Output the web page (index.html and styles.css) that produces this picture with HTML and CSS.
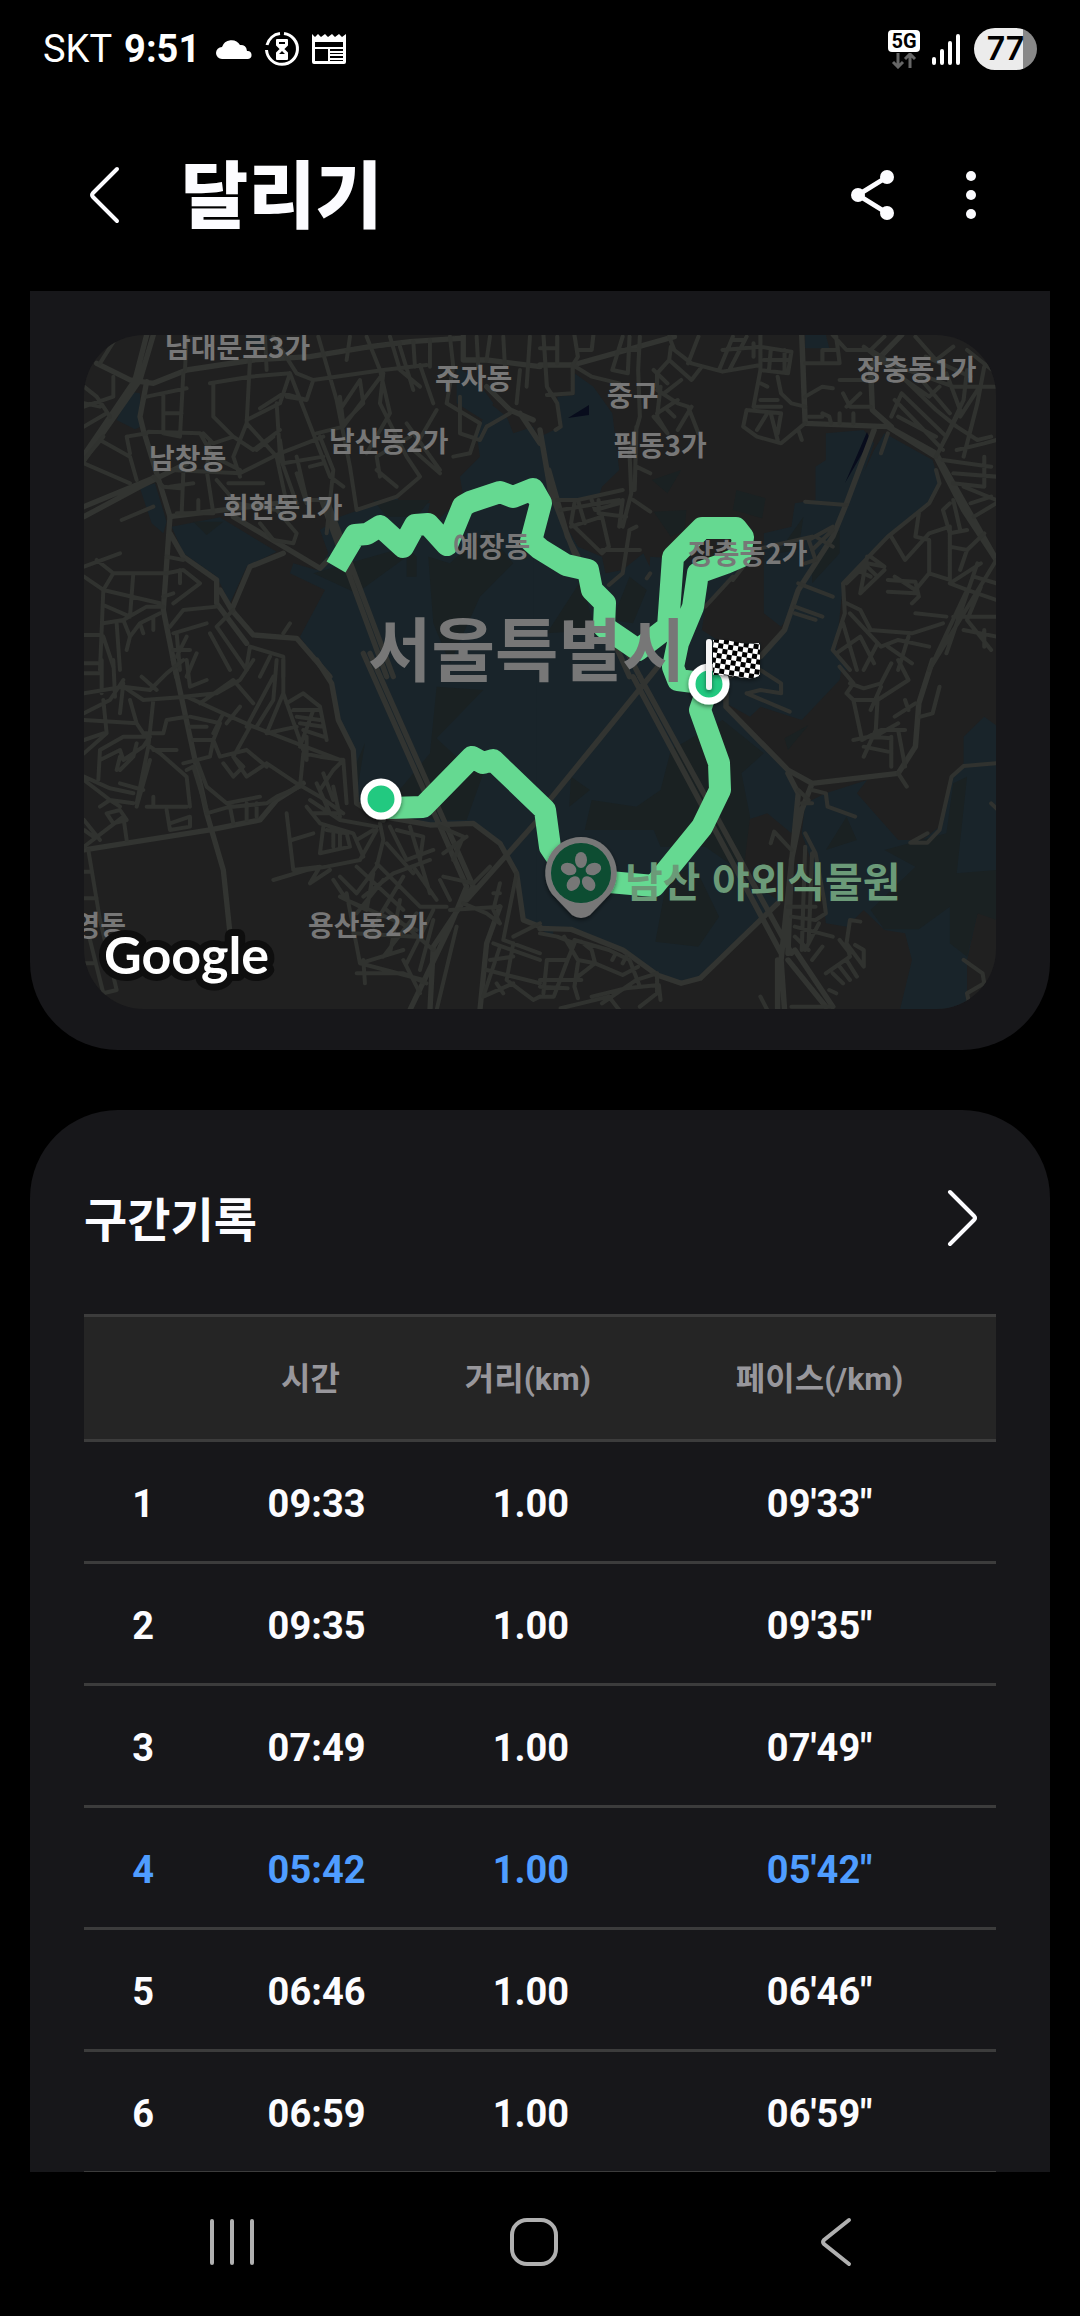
FILE: index.html
```html
<!DOCTYPE html>
<html lang="ko">
<head>
  <meta charset="UTF-8">
  <meta name="viewport" content="width=device-width, initial-scale=1.0">
  <title>달리기</title>
  <link rel="stylesheet" href="styles.css">
</head>
<body>
  <div class="status">
    <div class="status-left">
      <span class="carrier">SKT</span>
      <span class="clock">9:51</span>
      <svg class="cloud" width="36" height="22" viewBox="0 0 36 22"><path d="M6 21a6 6 0 0 1 0-12A10 10 0 0 1 24 7a6 6 0 0 1 7 6 4 4 0 0 1 1 8z" fill="#fff"/></svg>
      <svg width="36" height="36" viewBox="0 0 36 36">
        <path d="M20 2.500A15.500 15.500 0 1 1 2.500 19M3 14A15.500 15.500 0 0 1 16 2.500" fill="none" stroke="#fff" stroke-width="3"/>
        <path d="M13 9h10v5l-4 4 4 4v6H13v-6l4-4-4-4z" fill="#fff" stroke="#fff" stroke-width="2" stroke-linejoin="round"/>
        <path d="M15 11h6v2h-6zM15 23l3-3 3 3z" fill="#000"/>
      </svg>
      <svg class="note" width="34" height="32" viewBox="0 0 34 32">
        <path d="M0 1l3 3 3-3 3 3 4-3 3 3 4-3 3 3 4-3 3 3 4-3v28a2 2 0 0 1-2 2H2a2 2 0 0 1-2-2z" fill="#fff"/>
        <path d="M3 9h28v5H3zM3 16h13v12H3zM18 16h13v2H18zM18 20h13v1H18zM18 23h13v2H18zM18 27h13v1H18z" fill="#000"/>
      </svg>
    </div>
    <div class="status-right">
      <div class="network">
        <span class="network-type">5G</span>
        <svg width="26" height="16" viewBox="0 0 26 16"><path d="M7 0v14M2 9l5 5 5-5M19 15V1M14 6l5-5 5 5" fill="none" stroke="#666" stroke-width="3"/></svg>
      </div>
      <svg width="28" height="32" viewBox="0 0 28 32"><path d="M2 26v4M10 18v12M18 10v20M26 3v27" stroke="#fff" stroke-width="4" stroke-linecap="round"/></svg>
      <span class="battery">77</span>
    </div>
  </div>

  <header class="appbar">
    <button class="icon-btn" aria-label="뒤로">
      <svg width="32" height="58" viewBox="0 0 32 58"><path d="M28 3 4 27q-2 2 0 4l24 24" fill="none" stroke="#fcfcff" stroke-width="4" stroke-linecap="round"/></svg>
    </button>
    <h1>달리기</h1>
    <button class="icon-btn" aria-label="공유">
      <svg width="44" height="52" viewBox="0 0 44 52"><path d="M36 8 7 26l29 18" fill="none" stroke="#fcfcff" stroke-width="5"/><g fill="#fcfcff"><circle cx="36" cy="8" r="7"/><circle cx="7" cy="26" r="7"/><circle cx="36" cy="44" r="7"/></g></svg>
    </button>
    <button class="icon-btn more" aria-label="더보기">
      <svg width="10" height="48" viewBox="0 0 10 48" fill="#fcfcff"><circle cx="5" cy="5" r="5"/><circle cx="5" cy="24" r="5"/><circle cx="5" cy="43" r="5"/></svg>
    </button>
  </header>

  <main>
    <section class="card map-card">
      <svg class="map" viewBox="0 0 912 674" role="img" aria-label="달리기 경로">
        <defs>
          <pattern id="checker" width="10" height="10" patternUnits="userSpaceOnUse" patternTransform="rotate(9)">
            <rect width="10" height="10" fill="#fff"/>
            <path d="M0 0h5v5H0zM5 5h5v5H5z" fill="#000"/>
          </pattern>
          <filter id="shadow" x="-30%" y="-30%" width="160%" height="160%">
            <feDropShadow dx="0" dy="2" stdDeviation="2" flood-opacity="0.5"/>
          </filter>
        </defs>

        <!-- 공원 -->
        <g class="park">
          <path transform="translate(-64 -65) scale(.3333)" d="M330 365 360 370 362 470 345 478 290 450ZM360 655 405 640 440 755 430 790 395 760ZM455 770 600 742 770 845 680 890 630 1000 590 920 490 850ZM690 190h60l-30 45-40-20zM1310 290 1370 330 1420 400 1390 450 1310 400ZM1410 400 1460 440 1480 490 1540 470 1620 700V1220H920L840 1100 915 960 810 910 820 880 890 900 925 850 900 780 960 740 1130 680 1140 700 1230 700 1210 790 1330 680 1320 620 1380 560 1370 490Z"/>
          <path transform="translate(456 -65) scale(.3444 .3333)" d="M50 380 100 375 100 310 155 350 210 430 230 600 180 650 170 680 110 690 40 685 0 500 60 470ZM-20 600 60 740 110 830 180 860 190 910 240 900 300 850 350 960 340 1200H-20ZM320 860 600 880 480 1010 470 1080 530 1120 640 1120 640 1200H300ZM830 490 940 480 970 520 930 640 870 790 800 880 750 1000 700 1070 650 1030V790L730 770 740 700 800 690V590L830 570ZM1000 490 1140 570 1160 640 1130 700 1010 800 880 940 860 1140 900 1200H620L640 1160 710 1090 780 900 900 700 970 540ZM770 195h60l10 40h-70z"/>
          <path transform="translate(-64 325) scale(.3333)" d="M880 0H1600V830L1510 780 1480 630 1430 550 1360 490 1230 490 1010 430 1000 270 950 180 930 70Z"/>
          <path transform="translate(456 325) scale(.3444 .3333)" d="M-10 0H880L870 60 760 180 640 140 610 170 540 130 720 340 750 400 730 520 660 460 600 480 590 650 690 720 460 950 410 970 340 940 240 870 90 805-10 800ZM1290 170 1330 200V620L1270 760 1240 900V1050H1045L1080 900 1060 820 1000 810 940 750 890 800 830 790 820 700 760 520 770 430 830 400 950 360 920 400 1040 540 1110 540 1160 500 1190 350 1230 310V230Z"/>
        </g>
        <g class="wood">
          <path transform="translate(-64 -65) scale(.3333)" d="M1225 860 1290 880 1400 780 1480 880 1380 980 1290 1180 1240 1060ZM880 910 1160 830 1190 860 1190 920H1160V860L1010 970ZM520 755h90l-50 40zM1060 690h170l-40 50h-90z"/>
          <path transform="translate(456 -65) scale(.3444 .3333)" d="M325 630 410 600 370 670ZM330 725 425 720 420 780 380 800ZM570 660 655 685 645 745 560 720ZM20 1090 120 930 160 1080ZM210 1050 260 920 310 960 270 1060ZM690 850 765 740 750 840ZM790 870 870 780 870 850 790 940Z"/>
          <path transform="translate(-64 325) scale(.3333)" d="M1250 80 1390 90 1250 235 1330 310 1390 340 1340 480 1240 480 1130 400 1230 280ZM1000 330 1035 250 1010 400Z"/>
          <path transform="translate(456 325) scale(.3444 .3333)" d="M380 270 530 180 650 280 585 340 610 470 590 640 480 560 350 560 330 510 130 510 150 420 280 440 350 390ZM370 650 450 620 520 770 460 860 335 845ZM90 350 145 390 85 440ZM710 235 780 195 720 270ZM830 570 890 470 920 540ZM1000 570 1180 520 1200 370 1240 350 1210 640 1325 630 1325 780 1270 760 1240 890 1190 850 1190 740 1100 808 1000 808 960 750 1090 620Z"/>
        </g>
        <path class="water" d="M484 83 505 70V80ZM761 148 783 97 786 105Z"/>

        <!-- 큰길 -->
        <g class="road wide">
          <g transform="translate(-64 -65) scale(.3333)">
            <path d="M192 570 360 330 400 195M192 555 345 330 380 195M230 280 330 330 400 340 500 300 700 270 870 260 1050 230 1170 215 1320 205M380 335 360 440 370 480 450 740M192 710 410 620M192 740 360 650 500 580M1330 195V270H1400L1560 290M1400 350 1470 420 1540 450M905 690 1100 1220M920 690 1120 1220M1500 430 1560 520"/>
            <path d="M450 740 440 880 430 1020 470 1220M450 740 770 700M450 790 490 860 590 930 590 1000 680 1120M640 740 900 895 925 870M790 850 690 890 635 1020 600 960M635 1020 700 1095 830 1105 930 1220"/>
          </g>
          <g transform="translate(456 -65) scale(.3444 .3333)">
            <path d="M0 285H95L390 200M770 460 1010 470 1150 560 1230 720 1325 870M1010 470 1150 550 1320 860M0 480 30 660 100 850 260 1220M25 600 80 800 290 1220M760 195 770 460M970 480 890 700 850 800 750 960 710 1080 640 1160 550 1220M1050 195 960 290 965 420 1020 470"/>
          </g>
          <g transform="translate(-64 325) scale(.3333)">
            <path d="M1030-20 1340 680M1050-20 1360 680M460 0 560 460 610 630 630 820M192 570 570 510 720 480 770 420 850 370M1340 680 1290 800 1170 1050M1360 680 1240 860 1230 1050M1090 470 1230 495 1360 490 1440 550 1490 640 1510 780 1560 800M1580 450 1340 720M890 0 935 70 955 180 1000 270 1010 430 1090 480M1440 740 1400 850 1380 1050"/>
          </g>
          <g transform="translate(456 325) scale(.3444 .3333)">
            <path d="M270 50 700 880M290 50 730 880M350 10 170 240 20 430M540 60V140L720 330 790 370 1040 340 1090 260 1100 130 1140 0M720 340 750 400 735 560 700 900 710 1050M790 370 760 450 730 600 720 880M690 900 690 1050M720 900 830 1040M740 870 850 1040M0 805 90 808 240 870 340 945 410 970 465 955 690 730"/>
          </g>
        </g>

        <!-- 골목길 -->
        <g class="road">
          <g transform="translate(-64 -65) scale(.3333)">
            <path d="M240 280 290 200M280 320V380L192 410M192 350 230 380 270 440M192 400 240 410M380 380 500 355M430 375V480M490 310 480 500 430 490M430 430h55M385 485 540 490 580 560 660 600M450 600 660 610 780 550 910 500M570 340 690 320 810 310M580 340 580 440 640 500 580 520 550 490M690 270 680 460 770 560 800 700M680 460 640 560 660 620M810 310 780 400 680 450M770 400 780 560 830 700M810 310 930 620 970 650M760 200 830 310 880 330 1090 300 1220 285M800 380 860 390 880 330M860 390 790 370 720 415M895 200 950 390 990 590 1010 720M960 380 970 460 1030 400 1020 330 960 420M1090 310 1080 400 1110 460 1160 560 1200 620 1130 680 1010 720M1090 310 970 470 890 490M1040 200 1080 300 1110 430 1040 550M1110 200 1140 300 1200 350M1140 230 1180 360M1200 285 1240 400M1290 200 1300 290M1180 215 1185 290M1230 210V290M1370 200 1375 290M1410 200 1400 270M1450 200 1455 290M1300 290 1280 400 1380 460M1250 420 1180 540 1260 610M1320 380 1320 490 1380 510 1400 470M1380 460 1350 550 1300 560M1470 430 1400 470M1160 460 1260 600M1080 620 1070 560 1170 500M1070 600 1130 650M900 500 940 600 920 790M780 510 790 580 910 560M830 560 860 690 910 690M870 590 910 580M830 610 860 700M640 500 700 540 780 480M710 540 760 500M570 510 560 600 580 730 470 730M490 610 485 730M535 690V730M400 620 430 650 480 655M450 650 520 640M625 640H730M590 630 650 700 770 720 830 790 820 820 760 810 720 760M305 750 400 710M240 510 330 560 350 630M250 500 192 570M192 580 330 640M320 500 380 490M320 500 330 550M990 200 980 270M980 240 1140 220M1500 300 1490 400M1530 200 1520 350M192 890 300 850M230 870 280 910 250 960 192 920M250 960 240 1200M250 960 420 1000M280 910H430M340 910 330 1040 250 1005M250 1060 310 1050 380 1010 430 1010M290 1060 300 1200M310 1050 330 1100 320 1140M330 1100 360 1060 420 1030M360 1060 370 1090M400 1040V1080M440 910 490 900 540 940 460 1000M480 900V940M440 860 490 870M430 980 460 970M450 1070 490 1020 590 1010M460 1090 560 1060M470 1090 480 1200M500 1100 470 1160M460 1140H510M570 1090 630 1200M590 1070 640 1020M590 1070 680 1200M690 1130 790 1160 790 1220M690 1130 680 1190M790 1090 810 1060M192 1095H240M192 1180H240M250 1100 280 1190M735 200 740 300M500 200 495 300M192 470 260 430M720 1220 750 1160M530 1150 500 1220"/>
          </g>
          <g transform="translate(456 -65) scale(.3444 .3333)">
            <path d="M10 195 20 350 50 400 60 470 45 480M50 200V280M0 235H50M100 195 110 260 95 285 150 320 230 340M110 240H150L155 195M240 200 210 300 255 310 260 200M290 200 285 300 290 440 260 550 265 670 240 770M230 240H280M95 290V370L20 375M280 470 275 660M380 230 375 270 340 310 340 350M375 200 390 240 440 280 530 305 640 285M375 270 440 330 470 290M330 300 370 340M460 200 430 280M560 200 520 300M600 200 550 300M530 240 640 230 730 245 720 310 640 300M640 195V300L620 410H700M560 210H590M620 220V260M670 240 665 300M710 240V300M650 270H720M690 320 700 370 730 400 770 410M640 340 660 350M640 390H690M770 280H870L860 200M820 280V240H860M770 380 820 350 850 355M870 330H960M880 370 900 410H960M890 410 930 370M850 195 890 240 960 240 1000 200M600 420 590 470 630 500 700 520 770 460M600 420 700 430 690 490M660 430 630 480M670 430 690 510M750 480 760 510M820 430 840 440 845 460M780 440H820M870 430V460M910 430V460M340 360 400 400 430 410 460 490M340 430 400 390M350 350 340 440 370 490M360 370 410 330M370 490 330 440M390 440 370 420M440 410 400 480M280 590 320 610M50 690 110 690 240 660M60 720 230 690M100 700 90 760 180 850 200 830 180 740 90 770M110 690 130 760M150 690 160 720 230 700M170 690V730L250 740M240 690 230 770M270 690 320 725M280 770 260 780M180 840 290 840M260 780 240 910 200 945M320 910 310 925M770 695 890 705M850 770 780 810 800 870 770 880M800 800 850 830M850 780 790 840M560 920 480 1010M620 850 560 930M750 940 850 980M740 1010 820 1040M740 1030 800 1050M620 840 790 800M940 230 1050 320 1150 420 1210 470 1270 510M960 240 1040 290 1200 350 1325 350M1050 370 1020 440M1050 370 1180 500M1030 390 1170 540M1040 440 1150 500M1060 330 1130 380 1160 350M1100 320 1190 430M1180 310 1220 420 1190 480 1150 560M1240 300 1230 390 1160 540M1290 290 1270 400 1230 560M1270 360 1220 440M1270 510 1310 500M1210 540 1290 520 1325 510M1170 570 1310 590M1200 610 1325 620M1200 640 1290 650V560M1230 650 1325 690M1250 700 1310 680M1260 740 1325 700M1150 600 1160 640 1130 700 1010 800 880 940 885 1030 850 1140 900 1200M1020 800 1060 870 1130 790 1190 770M1100 730 1090 800 1130 810V910L1090 960 1030 920M1190 700 1170 720 1190 790 1240 780M1200 690 1220 780M1190 770V930L1130 910M1190 940 1280 880M1190 830 1240 840 1290 790M1240 840 1220 900M890 940 950 880 1000 890 960 860M940 880 980 920 930 970M920 900 960 920M950 860 930 970 1000 900M1010 930 1090 935 1100 980 1080 1000M1010 965 1090 970M1190 940 1240 960 1140 1180M1325 870 1130 1200M1240 960 1325 990M1260 920 1325 940M1270 880 1180 1150M1280 950 1240 1050 1310 1140M1200 1040H1325M1230 1080 1325 1100M1090 1030 1180 1040M890 1000 930 1020 960 1080 1080 1090 1170 1060M900 1030 990 1130 1040 1110 1130 1130M880 1060 920 1200M860 1150 930 1100 970 1180M980 1120 940 1200M1070 1100 1040 1200M1010 1130 1080 1180M1290 1130 1290 1080M1010 490 990 550M1090 200 1150 270 1200 230M1120 260 1250 320M1240 240 1325 310"/>
          </g>
          <g transform="translate(-64 325) scale(.3333)">
            <path d="M245 0V100M280 0 285 110M192 40H240M192 100 310 80 370 120 500 110M310 70 300 160M310 80 390 90 440 40 490 0M365 50 410 90M400 120 385 260 350 430M330 120 350 190 370 220H430L440 180 500 170M250 120 260 220 192 280M192 160 270 120 310 60M192 180 350 190M192 240 250 220M240 270 310 230 390 230 370 260M240 270 235 360M240 300 300 270 310 300 370 260M290 330 300 290M350 250 340 290 300 330M192 360 270 420 340 430M192 350 270 385 340 400M390 300 350 440M390 260 420 280 500 350 510 440M400 270 470 270M500 110 610 160 700 200 830 250 960 300M490 110 590 100 660 60 700 0M540 130 640 60 700 130M500 0 510 80 560 60M510 170 600 190 580 240 520 240M510 200 560 200M490 310 570 290 580 240 600 290 680 270M530 300 560 380 620 430 720 410M500 330 520 320 560 450M610 160 580 220M660 140 620 190M690 200 640 290 680 350 740 310M710 200 760 120 770 0M790 0 790 100 850 270M760 50 680 200M790 100 740 220 830 200M800 130 850 100 900 140 920 240M820 150 900 150M830 170 900 180M840 190 910 200M850 210 910 230M860 230V300M880 150 840 260M740 310 830 370 900 410 970 460M740 320 680 270M610 310 640 350 670 320 640 290M560 460 630 440 640 490M620 430 640 440 740 430 770 410M680 430V480M710 430V470M440 450 450 510 510 500 510 470 450 490M310 470 320 540M380 440 500 440M260 460 300 450 320 480 280 490ZM400 410V440M300 370 370 390M240 440 270 420 300 440M192 560 310 470M192 480 240 540M192 510 220 530M205 570 240 780 290 990 250 1000 210 840M192 635H210M192 715H230M192 910H220M800 460 820 630M760 660 860 630 920 620 1020 600 1070 510M815 540 880 520M820 630 900 620 870 670M870 670 930 630M920 510 980 520 990 560 900 580 910 500M940 520V560M960 520V560M850 280 840 380 770 410M850 280 900 290 970 300 980 430M900 390 940 330 970 300M870 420 960 480 1070 500M860 440 900 490 1000 520 1030 590M890 370 930 460M910 340 940 420M940 380 960 470M880 460H960M1010 540 1060 510M1080 490 1090 540 1070 620 1010 700 960 650M1100 550 1180 640M1110 500 1160 600 1240 570M1130 510 1210 530 1200 600M1170 500 1230 700M940 660 980 720 1190 810M1010 620 1150 750M1070 610 1200 740 1280 740M1030 710 1120 640 1230 600M1060 640 1040 750 960 710M1090 660 1010 760M1150 650 1060 800M1180 620 1250 720M1260 500 1330 530 1300 600M1270 580 1340 530M980 700 1020 910 1150 870M1000 820 1190 830M1020 910 1210 960M1010 940H1150L1220 970M1100 750 1240 870M1140 720 1110 880M1190 760 1090 890M1240 750 1160 910M1240 780 1200 930M1150 900 1200 1000M1030 900 1035 970M1260 660 1290 720M1270 650 1360 670 1410 620M1290 750 1440 740M1440 670 1420 750 1440 790M1420 700H1440M1330 730 1400 760 1440 790M1490 640 1450 840 1560 880M1480 830 1560 790M1420 850 1560 900M1410 900 1480 890M1400 930 1560 970M1440 860 1390 1010 1480 970M1480 850 1460 960 1540 1020 1560 1010M1450 1000 1430 970M1310 800 1250 1050"/>
          </g>
          <g transform="translate(456 325) scale(.3444 .3333)">
            <path d="M600 100 640 90 700 100V70L610 10M600 100 725 155M870 20 910 70 890 100 910 120 980 120 1070 60 1040 0M900 70 940 85 990 70 1020 10M910 120 935 240 990 210 1060 210M980 120 975 210 940 290M990 80 960 150M1030 170 1090 130M1040 210 1060 320M1020 230V320M940 260 1010 275M910 240 980 225 1040 190M960 230 1020 235M1060 120 1070 150M1105 170 1140 160 1160 80M1040 340 1065 380M1325 310 1230 318 1195 350 1160 510 1125 548H1075L1125 520M790 390 830 400 835 440 915 470M750 390 780 420M760 430H790M670 550 680 515 730 570M770 520 800 580 825 720 830 760 800 780 730 770M770 560 760 870M790 580 780 850M720 740H800M740 800 850 830M740 830 780 870M810 790 770 870M930 785 900 780 890 850 940 920V870L915 855M890 850 900 890 830 940M870 840 900 880M850 940 880 970M870 920 900 960M890 900 920 950M820 860 790 900M1230 900 1285 940 1290 970 1240 1000 1250 1050M0 820 50 830 100 850 80 900 20 900M70 830 110 900 160 910 240 945 285 920M120 845 150 870 160 910M100 840 200 870 260 900 290 980M210 900 220 880M240 910 250 890M80 900 40 1010 0 1010M110 910 100 980 110 1015M0 960H120M0 980 80 985M20 900 10 1000M160 910 110 950M150 1010 250 985 345 975 350 1020M180 1030 280 960 340 940V1000L290 1040M60 1045 200 1010 230 1050M640 1010 660 1050M730 1040H850M840 990 860 1000M1310 430 1330 450"/>
          </g>
        </g>

        <!-- 달린 경로 -->
        <path class="route" d="M297 464 305 473 339 472 388 422 399 428 409 425 461 475 466 512 474 524 497 538 525 547 570 551 618 492 636 455 635 428 616 375 625 349M625 349 594 345 589 332 594 308 609 272 614 238 642 228 656 222 659 202 652 193 618 193 589 222 584 292 554 315 535 302 520 292 521 268 508 255 504 235 482 230 456 214 447 206 457 168 449 154 429 162 416 157 386 167 379 171 363 210 344 189 331 190 319 212 296 191 283 199 271 200 252 232"/>

        <!-- 지명 -->
        <g class="label">
          <text x="81" y="23">남대문로3가</text>
          <text x="351" y="54">주자동</text>
          <text x="245" y="117">남산동2가</text>
          <text x="65" y="134">남창동</text>
          <text x="139" y="183">회현동1가</text>
          <text x="369" y="222">예장동</text>
          <text x="523" y="71">중구</text>
          <text x="529" y="121">필동3가</text>
          <text x="773" y="45">장충동1가</text>
          <text x="604" y="229">장충동2가</text>
          <text x="224" y="601">용산동2가</text>
          <text x="42" y="601" text-anchor="end">남영동</text>
          <text class="city" x="284" y="341">서울특별시</text>
          <text class="place" x="541" y="562">남산 야외식물원</text>
        </g>

        <g class="marker" filter="url(#shadow)">
          <circle cx="297" cy="464" r="17"/>
          <circle cx="625" cy="349" r="17"/>
        </g>

        <!-- 도착 깃발 -->
        <g filter="url(#shadow)">
          <path d="M629 305q12-1 22 2t25 1v32q-5 5-22 2t-25-2z" fill="url(#checker)"/>
          <path d="M625 307v45" stroke="#f5f5f5" stroke-width="6" stroke-linecap="round"/>
        </g>

        <!-- 식물원 핀 -->
        <g transform="translate(497 538)" filter="url(#shadow)">
          <path d="M0-36a36 36 0 0 1 29 57L9 42q-9 6-18 0L-29 21A36 36 0 0 1 0-36z" fill="#777"/>
          <circle r="30" fill="#094d32"/>
          <g fill="#777">
            <ellipse cy="-13" rx="6" ry="8"/>
            <ellipse cy="-13" rx="6" ry="8" transform="rotate(72)"/>
            <ellipse cy="-13" rx="6" ry="8" transform="rotate(144)"/>
            <ellipse cy="-13" rx="6" ry="8" transform="rotate(216)"/>
            <ellipse cy="-13" rx="6" ry="8" transform="rotate(288)"/>
          </g>
        </g>

        <text class="google" x="20" y="639">Google</text>
      </svg>
    </section>

    <section class="card lap-card">
      <div class="card-head">
        <h2>구간기록</h2>
        <button class="icon-btn" aria-label="구간기록 더보기">
          <svg width="32" height="58" viewBox="0 0 32 58"><path d="M4 3 28 27q2 2 0 4L4 55" fill="none" stroke="#fcfcff" stroke-width="4" stroke-linecap="round"/></svg>
        </button>
      </div>
      <table>
        <thead>
          <tr><th class="no"></th><th class="time">시간</th><th class="dist">거리(km)</th><th class="pace">페이스(/km)</th></tr>
        </thead>
        <tbody>
          <tr><td>1</td><td>09:33</td><td>1.00</td><td class="pace">09'33"</td></tr>
          <tr><td>2</td><td>09:35</td><td>1.00</td><td class="pace">09'35"</td></tr>
          <tr><td>3</td><td>07:49</td><td>1.00</td><td class="pace">07'49"</td></tr>
          <tr class="best"><td>4</td><td>05:42</td><td>1.00</td><td class="pace">05'42"</td></tr>
          <tr><td>5</td><td>06:46</td><td>1.00</td><td class="pace">06'46"</td></tr>
          <tr><td>6</td><td>06:59</td><td>1.00</td><td class="pace">06'59"</td></tr>
        </tbody>
      </table>
    </section>
  </main>

  <nav class="navbar">
    <button aria-label="최근 앱"><svg width="44" height="48" viewBox="0 0 44 48"><path d="M2 3v42M22 3v42M42 3v42" stroke="#b0b0b0" stroke-width="4" stroke-linecap="round"/></svg></button>
    <button aria-label="홈"><svg width="50" height="50" viewBox="0 0 50 50"><rect x="3" y="3" width="44" height="44" rx="15" fill="none" stroke="#b0b0b0" stroke-width="4"/></svg></button>
    <button aria-label="뒤로"><svg width="32" height="50" viewBox="0 0 32 50"><path d="M29 3 4 23q-2 2 0 4l25 20" fill="none" stroke="#b0b0b0" stroke-width="4" stroke-linecap="round"/></svg></button>
  </nav>
</body>
</html>
```

FILE: styles.css
```css
* {
  margin: 0;
  padding: 0;
  box-sizing: border-box;
}
body {
  display: flex;
  flex-direction: column;
  height: 100vh;
  overflow: hidden;
  background-color: #000;
  color: #fcfcff;
  font-family: Roboto, "Noto Sans CJK KR", sans-serif;
}
svg {
  display: block;
}
button {
  border: none;
  background: none;
  cursor: pointer;
}

/* 상태 표시줄 */
.status {
  display: flex;
  flex-shrink: 0;
  justify-content: space-between;
  align-items: center;
  height: 98px;
  padding: 0 43px;
  color: #fff;
}
.status-left,
.status-right {
  display: flex;
  align-items: center;
  gap: 12px;
}
.carrier {
  font-size: 38px;
  font-weight: 400;
}
.clock {
  margin-right: 4px;
  font-size: 38px;
  font-weight: 700;
}
.network {
  display: flex;
  flex-direction: column;
  align-items: center;
  gap: 1px;
}
.network-type {
  width: 32px;
  border-radius: 4px;
  background-color: #fff;
  color: #000;
  font-size: 20px;
  font-weight: 700;
  line-height: 22px;
  text-align: center;
}
.battery {
  width: 63px;
  margin-left: 2px;
  border-radius: 21px;
  background: linear-gradient(to right, #ececec 77%, #888 77%);
  color: #000;
  font-family: Inter, sans-serif;
  font-size: 32px;
  font-weight: 600;
  line-height: 42px;
  text-align: center;
}

/* 제목 줄 */
.appbar {
  display: flex;
  flex-shrink: 0;
  align-items: center;
  height: 193px;
  padding: 0 104px 0 89px;
}
.appbar h1 {
  flex: 1;
  margin-left: 60px;
  padding-top: 4px;
  font-size: 73px;
  font-weight: 900;
  line-height: 96px;
}
.more {
  margin-left: 71px;
}

/* 본문 */
main {
  flex: 1;
  min-height: 0;
  padding: 0 30px;
  overflow: hidden;
}
.card {
  padding: 0 54px;
  background-color: #17171a;
}
.map-card {
  margin-bottom: 60px;
  padding-top: 44px;
  padding-bottom: 41px;
  border-radius: 0 0 88px 88px;
}
.lap-card {
  border-radius: 88px 88px 0 0;
}
.map {
  width: 100%;
  height: auto;
  border-radius: 60px;
  background-color: #202020;
}
.park {
  fill: #19242a;
}
.wood {
  fill: #1a2122;
}
.water {
  fill: #080c1c;
}
.road {
  fill: none;
  stroke: #30322f;
  stroke-width: 12;
  stroke-linejoin: round;
  stroke-linecap: round;
}
.wide {
  stroke: #323431;
  stroke-width: 16;
}
.route {
  fill: none;
  stroke: #65d991;
  stroke-width: 22;
  stroke-linejoin: round;
}
.label {
  fill: #777;
  font-family: "Noto Sans CJK KR", sans-serif;
  font-size: 28px;
  font-weight: 700;
}
.city {
  font-size: 69px;
}
.place {
  fill: #6b9a78;
  font-size: 41px;
}
.marker circle {
  fill: #23c980;
  stroke: #fff;
  stroke-width: 7;
}
.google {
  fill: #fff;
  stroke: #0e0e0e;
  stroke-width: 14;
  stroke-linejoin: round;
  paint-order: stroke;
  font-family: Lato, sans-serif;
  font-size: 52px;
  font-weight: 700;
}

/* 구간기록 */
.card-head {
  display: flex;
  justify-content: space-between;
  align-items: center;
  height: 204px;
  padding: 12px 18px 0 0;
}
.card-head h2 {
  padding-bottom: 4px;
  font-size: 47px;
  font-weight: 700;
}
table {
  width: 100%;
  table-layout: fixed;
  border-spacing: 0;
  text-align: center;
}
th {
  height: 128px;
  padding-bottom: 4px;
  border-top: 3px solid #3c3c3c;
  border-bottom: 3px solid #3c3c3c;
  background-color: #252525;
  color: #98979c;
  font-size: 32px;
  font-weight: 700;
}
td {
  height: 122px;
  padding-top: 4px;
  border-bottom: 3px solid #3c3c3c;
  font-size: 38px;
  font-weight: 700;
}
.no {
  width: 13%;
}
.time {
  width: 25%;
  padding-right: 12px;
}
.dist {
  width: 22%;
  padding-right: 6px;
}
.pace {
  padding-left: 12px;
}
.best td {
  color: #4f9dff;
}

/* 하단 내비게이션 */
.navbar {
  display: flex;
  flex-shrink: 0;
  height: 144px;
  padding: 0 93px 4px 81px;
}
.navbar button {
  display: flex;
  flex: 1;
  justify-content: center;
  align-items: center;
}
```
